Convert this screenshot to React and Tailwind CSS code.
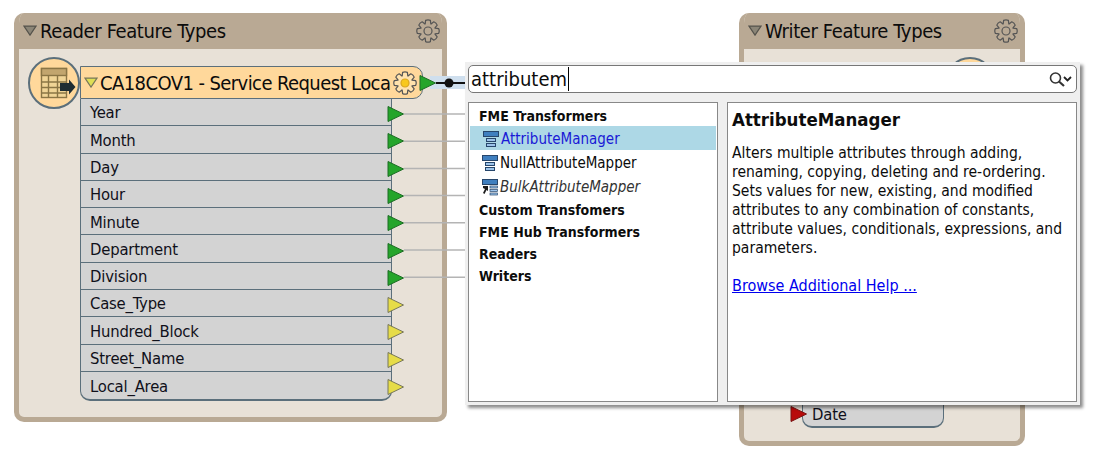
const uiFont = "font-['DejaVu_Sans_Condensed','DejaVu_Sans',sans-serif]";

const attrs = [
  "Year", "Month", "Day", "Hour", "Minute", "Department", "Division",
  "Case_Type", "Hundred_Block", "Street_Name", "Local_Area",
];
const connected = 7;

function gearPath() {
  // 8 tooth cog around 12,12
  const pts = [];
  for (let i = 0; i < 8; i++) {
    const a = (i * Math.PI) / 4 - Math.PI / 8;
    const step = Math.PI / 4;
    const p = (r, t) => `${(12 + r * Math.cos(t)).toFixed(2)} ${(12 + r * Math.sin(t)).toFixed(2)}`;
    pts.push(`${i === 0 ? "M" : "L"}${p(7.6, a + step * 0.02)}`);
    pts.push(`L${p(10.9, a + step * 0.22)}`);
    pts.push(`Q${p(11.8, a + step * 0.5)} ${p(10.9, a + step * 0.78)}`);
    pts.push(`L${p(7.6, a + step * 0.98)}`);
  }
  return pts.join(" ") + "Z";
}

function Gear({ size, className, fill = "none", center = "none" }) {
  return (
    <svg width={size} height={size} viewBox="0 0 24 24" className={className}>
      <path d={gearPath()} fill={fill} stroke="#555" strokeWidth="1.2" strokeLinejoin="round" />
      <circle cx="12" cy="12" r="4" fill={center} stroke={center === "none" ? "#555" : "#d9a520"} strokeWidth="1.2" />
    </svg>
  );
}

function Port({ color, edge, className, style }) {
  return (
    <svg width="18" height="18" viewBox="0 0 18 18" className={className} style={style}>
      <path d="M1 1.5 L16.5 9 L1 16.5 Z" fill={color} stroke={edge} strokeWidth="1" />
    </svg>
  );
}

function Caret({ fill, stroke, size = 14 }) {
  return (
    <svg width={size} height={size * 0.8} viewBox="0 0 14 11" className="shrink-0">
      <path d="M1 1 L13 1 L7 10 Z" fill={fill} stroke={stroke} strokeWidth="1.2" />
    </svg>
  );
}

function PanelHeader({ title }) {
  return (
    <div className="flex h-[36px] shrink-0 items-center justify-between bg-[#b9a994] pl-[4px] pr-[2px]">
      <div className="flex items-center gap-[3px]">
        <Caret fill="#8b8577" stroke="#55534c" />
        <span className="text-[20px] leading-none tracking-[-0.38px] text-[#0c0c0c]">{title}</span>
      </div>
      <Gear size={24} />
    </div>
  );
}

function BucketIcon({ italic }) {
  return (
    <svg width="18" height="17" viewBox="0 0 18 17" className="shrink-0">
      <rect x="0.5" y="0.5" width="15" height="5" fill="#3f7fbf" stroke="#27466b" />
      {italic ? (
        <>
          <rect x="8" y="7" width="7.5" height="2" fill="#9cc3ea" stroke="#27466b" strokeWidth="0.7" />
          <rect x="8" y="10.5" width="7.5" height="2" fill="#9cc3ea" stroke="#27466b" strokeWidth="0.7" />
          <rect x="8" y="14" width="7.5" height="2" fill="#9cc3ea" stroke="#27466b" strokeWidth="0.7" />
          <path d="M1 7 H6 V12 L4.5 11 L2.5 15 L1 14 L3 10 L1 9 Z" fill="#1c1c1c" />
        </>
      ) : (
        <>
          <rect x="3.5" y="7.5" width="9" height="3" fill="#9cc3ea" stroke="#27466b" />
          <rect x="3.5" y="12.5" width="9" height="3" fill="#9cc3ea" stroke="#27466b" />
        </>
      )}
    </svg>
  );
}

function ReaderPanel() {
  return (
    <div className="absolute left-[14px] top-[13px] flex h-[409px] w-[433px] flex-col overflow-hidden rounded-[10px] border-[5px] border-t-0 border-[#b9a994] bg-[#e8e1d7]">
      <PanelHeader title="Reader Feature Types" />
      <div className="relative pl-[61px] pt-[17px]">
        <div className="flex h-[33px] w-[343px] items-center overflow-hidden rounded-r-[10px] border border-[#5b6f7b] bg-[#ffd89b] pl-[3px]">
          <Caret fill="#dede55" stroke="#77775a" />
          <span className="ml-[2px] whitespace-nowrap text-[20px] leading-none tracking-[-0.58px] text-[#0c0c0c]">
            CA18COV1 - Service Request Loca
          </span>
        </div>
        <div className="w-[312px] overflow-hidden rounded-b-[10px] border-x border-b-2 border-[#5b6f7b] bg-[#d3d3d3]">
          {attrs.map((a, i) => (
            <div
              key={a}
              className={`flex h-[27.3px] items-center pl-[9px] pt-[3px] text-[16.5px] leading-none tracking-[-0.2px] text-[#10101a] ${
                i < attrs.length - 1 ? "border-b border-[#5b6f7b]" : ""
              }`}
            >
              {a}
            </div>
          ))}
        </div>
      </div>
    </div>
  );
}

function WriterPanel() {
  return (
    <div className="absolute left-[739px] top-[13px] flex h-[433px] w-[286px] flex-col overflow-hidden rounded-[10px] border-[5px] border-t-0 border-[#b9a994] bg-[#e8e1d7]">
      <PanelHeader title="Writer Feature Types" />
      <div className="relative flex-1">
        <div className="absolute left-[201px] top-[8px] h-[50px] w-[50px] rounded-full border-2 border-[#5b6f7b] bg-[#ffd89b]" />
        <div className="absolute bottom-[13px] left-[58px] flex h-[28px] w-[142px] items-center rounded-b-[10px] border-x border-b-2 border-[#5b6f7b] bg-[#d3d3d3] pl-[9px] pt-[4px] text-[16.5px] leading-none tracking-[-0.2px] text-[#10101a]">
          Date
        </div>
        <Port color="#b80b0b" edge="#7a1212" className="absolute bottom-[18px] left-[46px]" />
      </div>
    </div>
  );
}

function Wires() {
  return (
    <svg width="1099" height="460" className="pointer-events-none absolute left-0 top-0">
      {attrs.slice(0, connected).map((a, i) => (
        <line key={a} x1="404" x2="468" y1={114 + i * 27.2} y2={114 + i * 27.2} stroke="#b4b4b4" strokeWidth="1.5" />
      ))}
      <rect x="430" y="76" width="36" height="13" fill="#cfdfee" />
      <line x1="436" x2="466" y1="83" y2="83" stroke="#111" strokeWidth="2" />
      <circle cx="449" cy="83" r="4.5" fill="#111" />
    </svg>
  );
}

function Ports() {
  return (
    <>
      <Gear size={24} fill="#ffe2ad" center="#f8c81c" className="absolute left-[393px] top-[71px]" />
      <Port color="#25a52b" edge="#1d6d24" className="absolute left-[419px] top-[74px]" />
      {attrs.map((a, i) => (
        <Port
          key={a}
          color={i < connected ? "#25a52b" : "#e6dc48"}
          edge={i < connected ? "#1d6d24" : "#77775a"}
          className="absolute left-[387px]"
          style={{ top: 105 + i * 27.3 }}
        />
      ))}
    </>
  );
}

function ReaderIcon() {
  return (
    <div className="absolute left-[28px] top-[57px] flex h-[52px] w-[52px] items-center justify-center rounded-full border-2 border-[#5b6f7b] bg-[#ffd89b]">
      <svg width="52" height="52" viewBox="0 0 52 52" className="shrink-0">
        <rect x="13.5" y="11.5" width="25" height="29" fill="#f0d496" stroke="#8a7545" strokeWidth="1.4" />
        <rect x="13.5" y="11.5" width="25" height="7" fill="#c2a56e" stroke="#8a7545" strokeWidth="1.4" />
        <path d="M13.5 25H38.5M13.5 30.5H38.5M13.5 36H38.5M20.5 18.5V40.5M29.5 18.5V40.5" stroke="#8a7545" strokeWidth="1.4" fill="none" />
        <path d="M32 26H41V22.5L47.5 30L41 37.5V34H32Z" fill="#1f2d33" />
      </svg>
    </div>
  );
}

function SearchPopup() {
  const rowText = "flex h-[22px] items-center pl-[10px] pt-[2px] text-[14px] font-bold leading-none text-[#0c0c0c]";
  const itemText = "flex h-[24px] items-center pl-[13px] pt-[2px] text-[15px] leading-none";
  return (
    <div className="absolute left-[465px] top-[62px] flex h-[343px] w-[615px] flex-col gap-[9px] bg-[#efefef] p-[3px] shadow-[3px_3px_3px_rgba(0,0,0,0.45)]">
      <div className="flex h-[28px] items-center justify-between rounded-[5px] border border-[#777] bg-white pl-[2px] pr-[2px]">
        <div className="flex items-center">
          <span className="text-[20px] leading-none text-[#0c0c0c]">attributem</span>
          <span className="ml-[1px] h-[24px] w-px bg-black" />
        </div>
        <svg width="26" height="16" viewBox="0 0 26 16">
          <circle cx="7.5" cy="7" r="5" fill="none" stroke="#333" strokeWidth="1.6" />
          <path d="M11 10.5L16 15" stroke="#333" strokeWidth="2.2" />
          <path d="M16 6L19.5 9.5L23 6" fill="none" stroke="#222" strokeWidth="1.8" />
        </svg>
      </div>
      <div className="flex h-[300px] gap-[9px]">
        <div className="w-[250px] border border-[#888] bg-white pt-px">
          <div className={rowText}>FME Transformers</div>
          <div className={`${itemText} mx-px bg-[#add8e6] pl-[12px] text-[#1a1ad6]`}>
            <BucketIcon />
            AttributeManager
          </div>
          <div className={`${itemText} text-[#0c0c0c]`}>
            <BucketIcon />
            NullAttributeMapper
          </div>
          <div className={`${itemText} italic text-[#333]`}>
            <BucketIcon italic />
            BulkAttributeMapper
          </div>
          <div className={rowText}>Custom Transfomers</div>
          <div className={rowText}>FME Hub Transformers</div>
          <div className={rowText}>Readers</div>
          <div className={rowText}>Writers</div>
        </div>
        <div className="flex-1 border border-[#888] bg-white px-[4px] pt-[6px] text-[#0c0c0c]">
          <h2 className="text-[18.5px] font-bold leading-[22px]">AttributeManager</h2>
          <p className="mt-[13px] text-[15.5px] leading-[19px]">
            Alters multiple attributes through adding,
            <br />
            renaming, copying, deleting and re-ordering.
            <br />
            Sets values for new, existing, and modified
            <br />
            attributes to any combination of constants,
            <br />
            attribute values, conditionals, expressions, and
            <br />
            parameters.
          </p>
          <a href="#" className="mt-[18px] block text-[16px] leading-[19px] text-[#0000ee] underline">
            Browse Additional Help ...
          </a>
        </div>
      </div>
    </div>
  );
}

export default function App() {
  return (
    <div className={`relative h-[460px] w-[1099px] overflow-hidden bg-white ${uiFont}`}>
      <ReaderPanel />
      <WriterPanel />
      <Wires />
      <Ports />
      <ReaderIcon />
      <SearchPopup />
    </div>
  );
}
